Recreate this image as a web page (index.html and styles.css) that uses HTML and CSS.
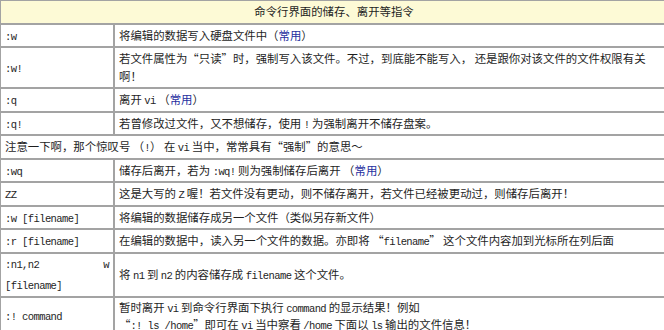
FILE: index.html
```html
<!DOCTYPE html>
<html lang="zh-CN">
<head>
<meta charset="utf-8">
<title>命令行界面的储存、离开等指令</title>
<link rel="stylesheet" href="styles.css">
</head>
<body>
<table class="cmd">
  <colgroup><col class="c1"><col class="c2"></colgroup>
  <tr><th colspan="2" class="head">命令行界面的储存、离开等指令</th></tr>
  <tr><td class="k"><span class="m">:w</span></td><td>将编辑的数据写入硬盘文件中（<span class="hot">常用</span>）</td></tr>
  <tr><td class="k"><span class="m">:w!</span></td><td>若文件属性为“只读”时，强制写入该文件。不过，到底能不能写入， 还是跟你对该文件的文件权限有关啊！</td></tr>
  <tr><td class="k"><span class="m">:q</span></td><td>离开 <span class="m">vi</span> （<span class="hot">常用</span>）</td></tr>
  <tr><td class="k"><span class="m">:q!</span></td><td>若曾修改过文件，又不想储存，使用 <span class="m">!</span> 为强制离开不储存盘案。</td></tr>
  <tr><td colspan="2">注意一下啊，那个惊叹号 （<span class="m">!</span>） 在 <span class="m">vi</span> 当中，常常具有“强制”的意思～</td></tr>
  <tr><td class="k"><span class="m">:wq</span></td><td>储存后离开，若为 <span class="m">:wq!</span> 则为强制储存后离开 （<span class="hot">常用</span>）</td></tr>
  <tr><td class="k"><span class="m">ZZ</span></td><td>这是大写的 <span class="m">Z</span> 喔！若文件没有更动，则不储存离开，若文件已经被更动过，则储存后离开！</td></tr>
  <tr><td class="k"><span class="m">:w [filename]</span></td><td>将编辑的数据储存成另一个文件（类似另存新文件）</td></tr>
  <tr><td class="k"><span class="m">:r [filename]</span></td><td>在编辑的数据中，读入另一个文件的数据。亦即将 “<span class="m">filename</span>” 这个文件内容加到光标所在列后面</td></tr>
  <tr><td class="k"><div class="split m"><span>:n1,n2</span><span>w</span></div><div class="m2"><span class="m">[filename]</span></div></td><td>将 <span class="m">n1</span> 到 <span class="m">n2</span> 的内容储存成 <span class="m">filename</span> 这个文件。</td></tr>
  <tr class="last"><td class="k"><span class="m">:! command</span></td><td>暂时离开 <span class="m">vi</span> 到命令行界面下执行 <span class="m">command</span> 的显示结果！例如<br> “<span class="m">:! ls /home</span>”即可在 <span class="m">vi</span> 当中察看 <span class="m">/home</span> 下面以 <span class="m">ls</span> 输出的文件信息！</td></tr>
</table>
</body>
</html>
```

FILE: styles.css
```css
html, body {
  margin: 0;
  padding: 0;
  background: #ffffff;
  overflow: hidden;
}

.cmd {
  width: 668px;
  table-layout: fixed;
  border-collapse: separate;
  border-spacing: 0;
  font-family: "Noto Sans CJK SC", sans-serif;
  font-size: 11.4px;
  line-height: 17.5px;
  color: #1e1e1e;
}

.c1 { width: 114px; }

.cmd th,
.cmd td {
  border: 1px solid #a3a3a3;
  padding: 2px 4px;
  vertical-align: middle;
  text-align: left;
  font-weight: normal;
}

.cmd .head {
  background: #fdfad6;
  text-align: center;
  padding: 2px 4px;
}

.cmd .last td {
  line-height: 17px;
  padding-top: 1px;
}

.m {
  font-family: "Liberation Mono", monospace;
  font-size: 10.5px;
  line-height: 1;
  letter-spacing: -0.6px;
}

.split {
  display: flex;
  justify-content: space-between;
  line-height: 19px;
}

.m2 {
  line-height: 19px;
}

.hot {
  color: #1f2fa0;
}
```
